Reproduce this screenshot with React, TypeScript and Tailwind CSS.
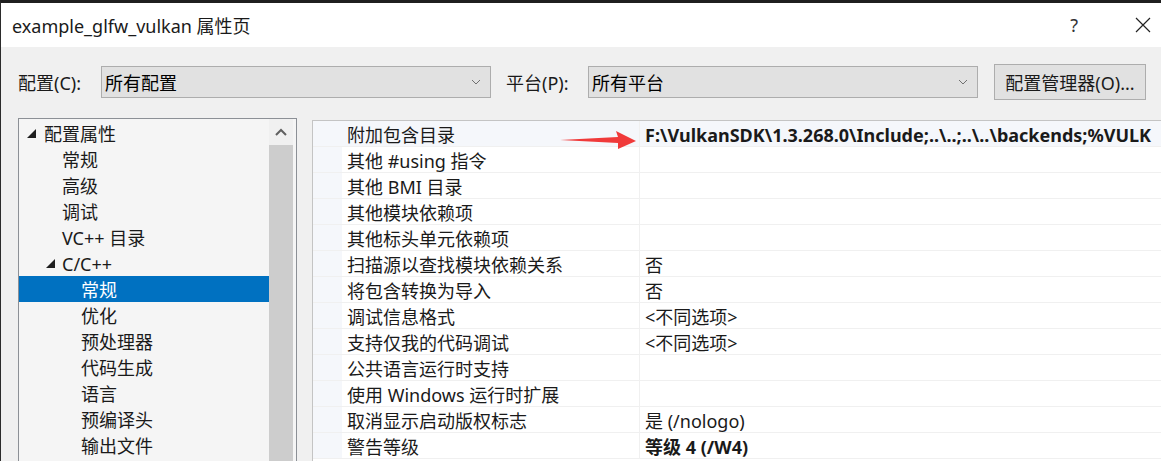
import React from "react";

const font = { fontFamily: '"Noto Sans", "Noto Sans CJK SC", sans-serif' };

const treeItems: { label: string; level: number; expand?: boolean; selected?: boolean }[] = [
  { label: "配置属性", level: 0, expand: true },
  { label: "常规", level: 1 },
  { label: "高级", level: 1 },
  { label: "调试", level: 1 },
  { label: "VC++ 目录", level: 1 },
  { label: "C/C++", level: 1, expand: true },
  { label: "常规", level: 2, selected: true },
  { label: "优化", level: 2 },
  { label: "预处理器", level: 2 },
  { label: "代码生成", level: 2 },
  { label: "语言", level: 2 },
  { label: "预编译头", level: 2 },
  { label: "输出文件", level: 2 },
];

const props: { name: string; value?: string; bold?: boolean; hl?: boolean }[] = [
  { name: "附加包含目录", value: "F:\\VulkanSDK\\1.3.268.0\\Include;..\\..;..\\..\\backends;%VULK", bold: true, hl: true },
  { name: "其他 #using 指令" },
  { name: "其他 BMI 目录" },
  { name: "其他模块依赖项" },
  { name: "其他标头单元依赖项" },
  { name: "扫描源以查找模块依赖关系", value: "否" },
  { name: "将包含转换为导入", value: "否" },
  { name: "调试信息格式", value: "<不同选项>" },
  { name: "支持仅我的代码调试", value: "<不同选项>" },
  { name: "公共语言运行时支持" },
  { name: "使用 Windows 运行时扩展" },
  { name: "取消显示启动版权标志", value: "是 (/nologo)" },
  { name: "警告等级", value: "等级 4 (/W4)", bold: true },
];

function Tri() {
  return (
    <svg width="9" height="9" viewBox="0 0 9 9">
      <polygon points="9,0 9,9 0,9" fill="#1e1e1e" />
    </svg>
  );
}

function Chevron() {
  return (
    <svg width="10" height="6" viewBox="0 0 10 6">
      <path d="M1 1 L5 5 L9 1" fill="none" stroke="#707070" strokeWidth="1" />
    </svg>
  );
}

function Combo({ text, width }: { text: string; width: string }) {
  return (
    <div className={`${width} h-[32px] border border-[#adadad] bg-[#e1e1e1] flex items-center pl-[3px] pr-[9px]`}>
      <span className="flex-1 text-[18px] text-black leading-none pt-[2px]">{text}</span>
      <Chevron />
    </div>
  );
}

export default function App() {
  return (
    <div style={font} className="w-[1161px] h-[461px] overflow-hidden bg-[#f0f0f0] border-l border-[#2b2b2b] border-t-[3px] border-t-[#1f1f1f] flex flex-col text-[#1a1a1a]">
      <div className="h-[44px] bg-white flex items-center shrink-0">
        <span className="ml-[11px] text-[18px] pt-[2px]">example_glfw_vulkan 属性页</span>
        <span className="ml-auto mr-[57px] text-[18px] text-[#333]">?</span>
        <svg width="16" height="16" viewBox="0 0 16 16" className="mr-[10px]">
          <path d="M1 1 L15 15 M15 1 L1 15" stroke="#222" strokeWidth="1.2" />
        </svg>
      </div>

      <div className="flex items-center h-[36px] mt-[17px] shrink-0">
        <span className="ml-[17px] w-[83px] text-[18px] pt-[2px]">配置(C):</span>
        <Combo text="所有配置" width="w-[390px]" />
        <span className="ml-[15px] w-[82px] text-[18px] pt-[2px]">平台(P):</span>
        <Combo text="所有平台" width="w-[390px]" />
        <div className="ml-[16px] w-[152px] h-[36px] border border-[#adadad] bg-[#e1e1e1] flex items-center justify-center text-[18px] pt-[2px]">
          配置管理器(O)...
        </div>
      </div>

      <div className="flex mt-[18px] flex-1 min-h-0">
        <div className="ml-[17px] w-[279px] border border-[#8c9096] border-b-0 bg-[#f5f5f5] flex shrink-0">
          <div className="w-[250px] pt-[1px]">
            {treeItems.map((t, i) => (
              <div
                key={i}
                className={`h-[26px] flex items-center text-[18px] ${t.selected ? "bg-[#0071c1] text-white" : ""}`}
              >
                {t.level === 0 && (
                  <>
                    <span className="ml-[8px] w-[17px] flex"><Tri /></span>
                    <span className="pt-[2px]">{t.label}</span>
                  </>
                )}
                {t.level === 1 && (
                  <>
                    <span className="ml-[27px] w-[16px] flex">{t.expand && <Tri />}</span>
                    <span className="pt-[2px]">{t.label}</span>
                  </>
                )}
                {t.level === 2 && <span className="ml-[62px] pt-[2px]">{t.label}</span>}
              </div>
            ))}
          </div>
          <div className="w-[24px] flex flex-col">
            <div className="h-[26px] bg-[#f0f0f0] flex items-center justify-center">
              <svg width="12" height="8" viewBox="0 0 12 8">
                <path d="M1 7 L6 2 L11 7" fill="none" stroke="#606060" strokeWidth="2" />
              </svg>
            </div>
            <div className="flex-1 bg-[#cdcdcd]" />
          </div>
        </div>

        <div className="ml-[15px] mt-[2px] flex-1 border-l border-t border-[#c4c4c4] bg-white relative overflow-hidden">
          {props.map((p, i) => (
            <div key={i} className={`h-[26px] flex border-b border-[#f0f0f0] ${p.hl ? "bg-[#f5f7fb]" : ""}`}>
              <div className="w-[29px] shrink-0 bg-[#f5f7fb]" />
              <div className="w-[298px] shrink-0 pl-[5px] pt-[2px] text-[18px] leading-[25px] border-r border-[#f0f0f0] whitespace-nowrap">
                {p.name}
              </div>
              <div className={`pl-[5px] pt-[2px] text-[18px] leading-[25px] whitespace-nowrap ${p.bold ? "font-bold" : ""}`}>
                {p.value}
              </div>
            </div>
          ))}
          <svg width="80" height="22" viewBox="0 0 80 22" className="absolute left-[247px] top-[8px]">
            <polygon points="0,11 58,8 56,2 76,12 58,20 58,14" fill="#f03a3a" />
          </svg>
        </div>
      </div>
    </div>
  );
}
